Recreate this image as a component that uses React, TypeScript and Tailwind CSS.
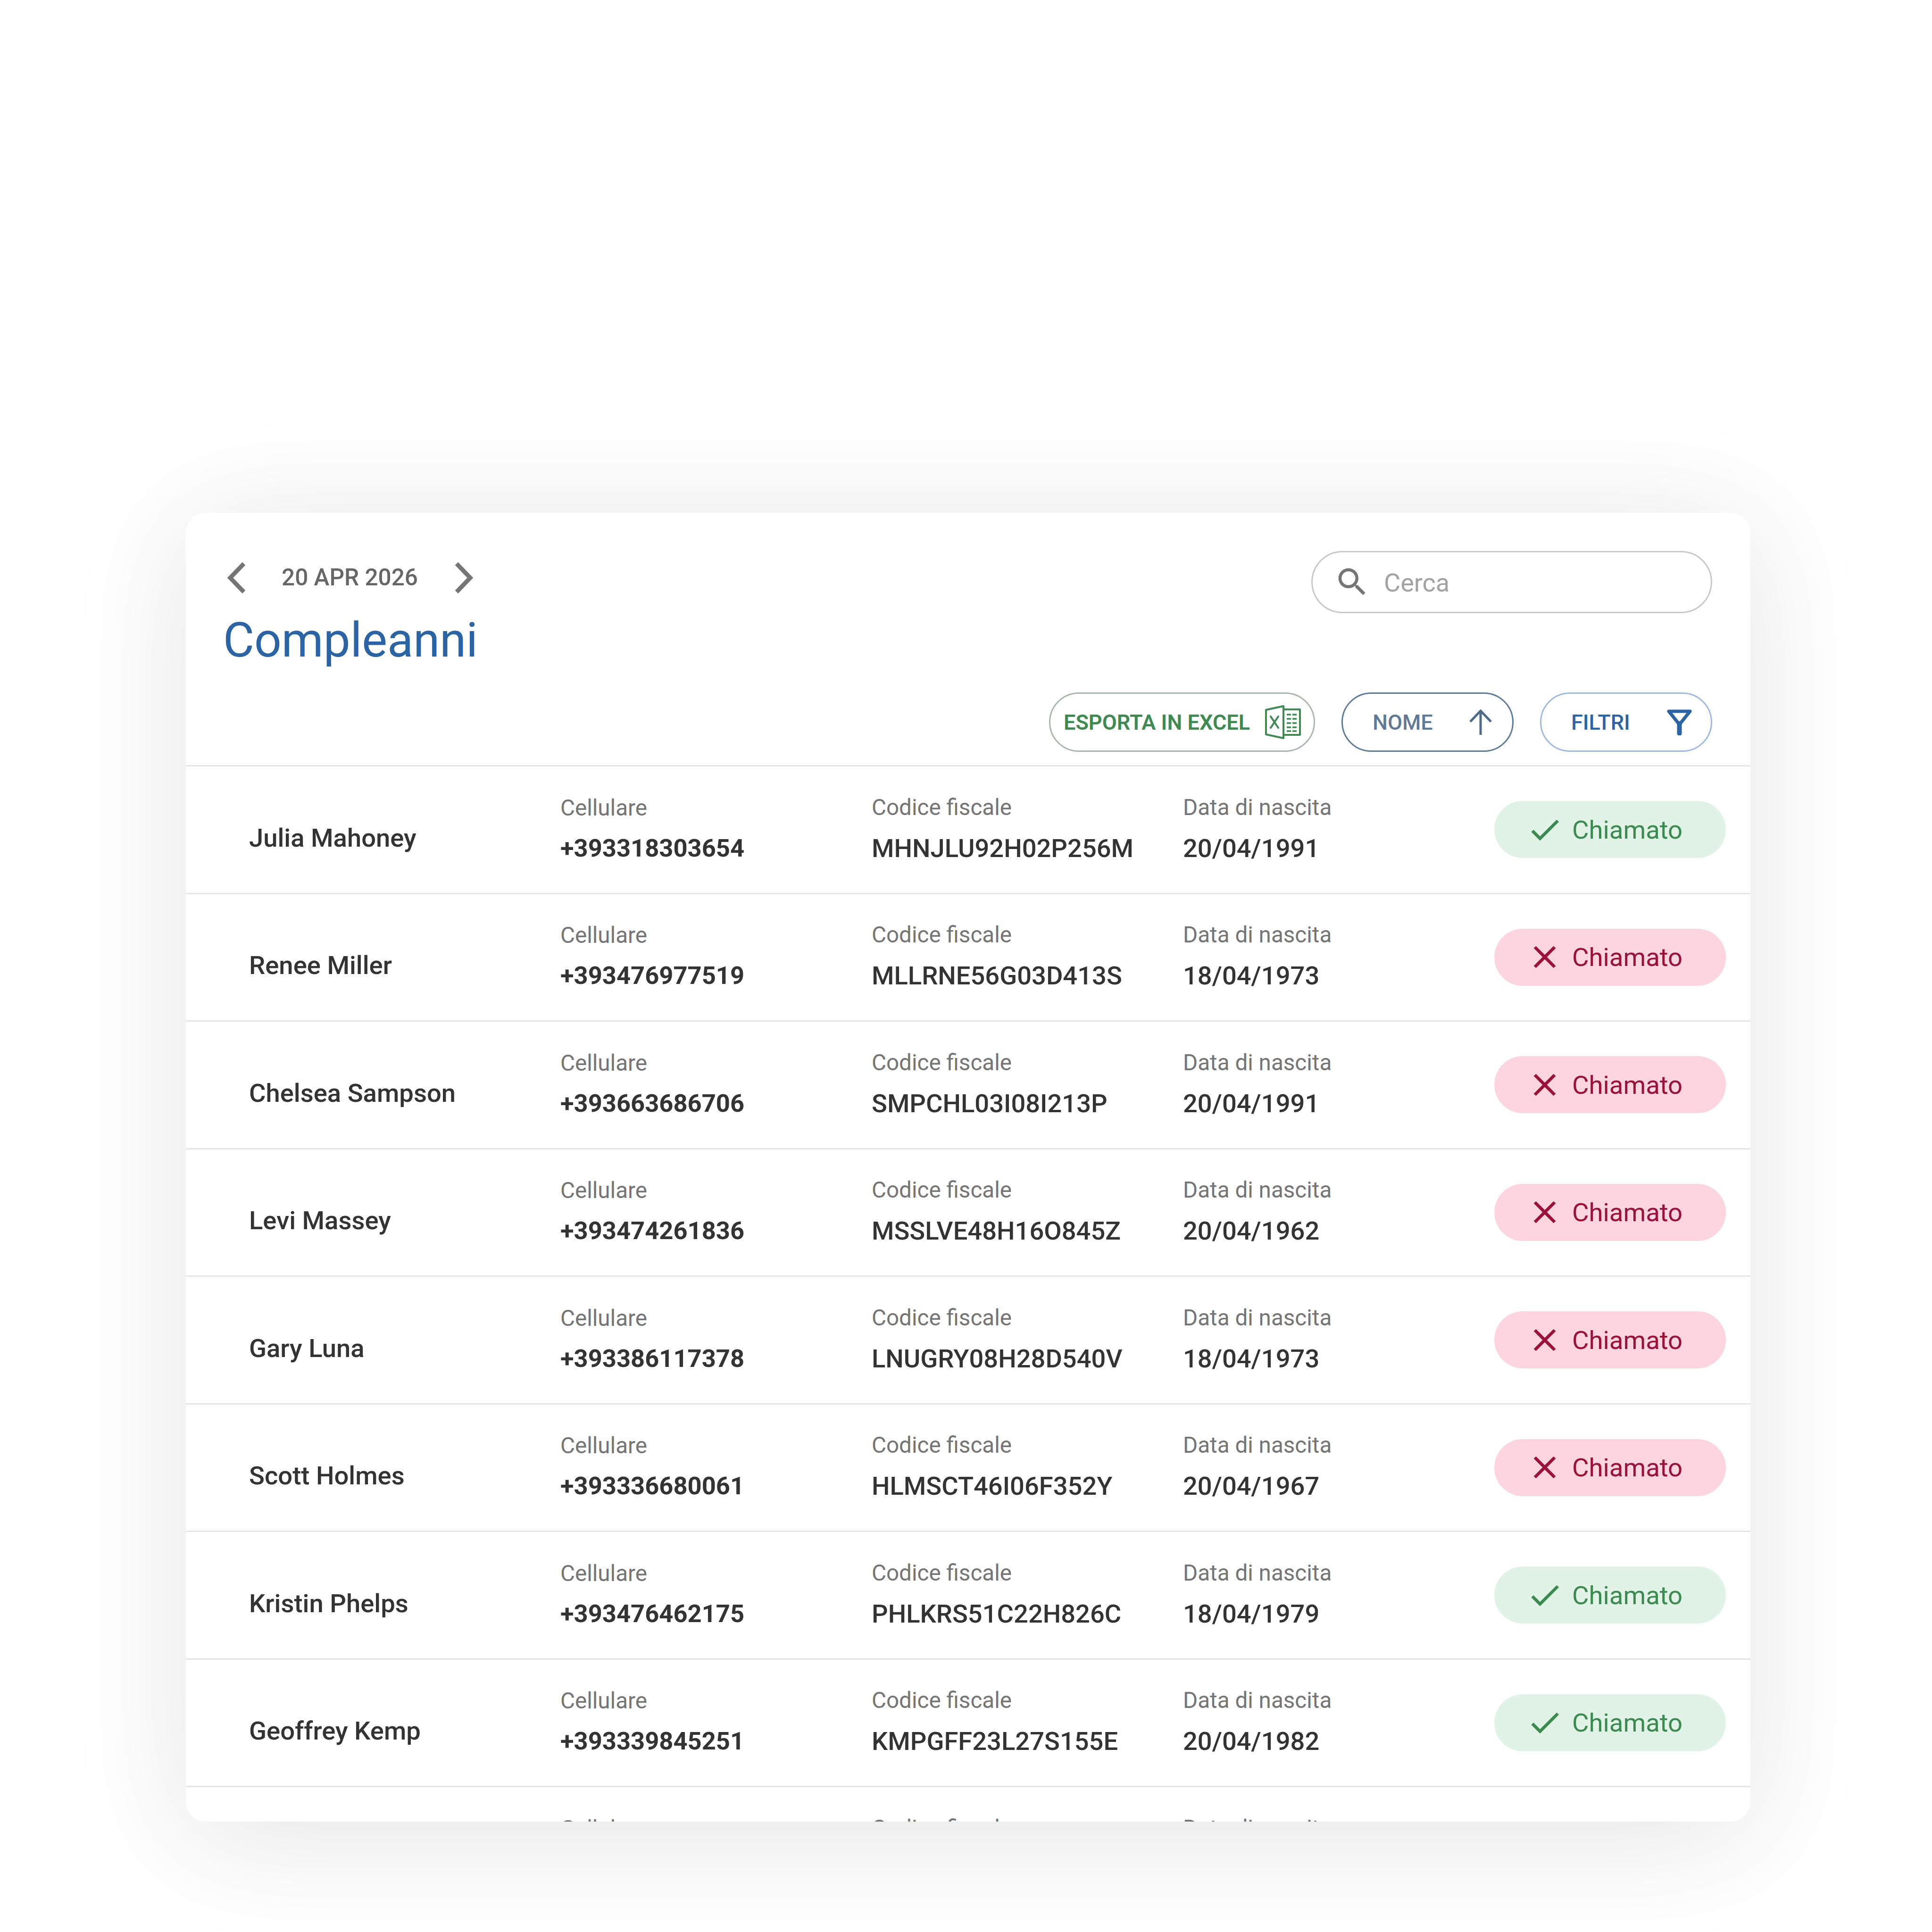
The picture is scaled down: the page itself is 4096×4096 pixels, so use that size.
const rows = [
  { name: "Julia Mahoney", phone: "+393318303654", cf: "MHNJLU92H02P256M", birth: "20/04/1991", called: true },
  { name: "Renee Miller", phone: "+393476977519", cf: "MLLRNE56G03D413S", birth: "18/04/1973", called: false },
  { name: "Chelsea Sampson", phone: "+393663686706", cf: "SMPCHL03I08I213P", birth: "20/04/1991", called: false },
  { name: "Levi Massey", phone: "+393474261836", cf: "MSSLVE48H16O845Z", birth: "20/04/1962", called: false },
  { name: "Gary Luna", phone: "+393386117378", cf: "LNUGRY08H28D540V", birth: "18/04/1973", called: false },
  { name: "Scott Holmes", phone: "+393336680061", cf: "HLMSCT46I06F352Y", birth: "20/04/1967", called: false },
  { name: "Kristin Phelps", phone: "+393476462175", cf: "PHLKRS51C22H826C", birth: "18/04/1979", called: true },
  { name: "Geoffrey Kemp", phone: "+393339845251", cf: "KMPGFF23L27S155E", birth: "20/04/1982", called: true },
  { name: "Wanda Reyes", phone: "+393471205583", cf: "RYSWND70A41F205K", birth: "20/04/1970", called: false },
];

function Field({ label, value, bold }: { label: string; value: string; bold?: boolean }) {
  return (
    <div className="flex flex-col pb-[6px]">
      <span className="text-[47.6px] leading-[60px] text-[#757575]">{label}</span>
      {bold ? (
        <span className="mt-[24px] text-[52.5px] font-bold leading-[62px] text-[#333333]">{value}</span>
      ) : (
        <span className="mt-[26px] text-[54.3px] font-medium leading-[62px] text-[#333333]">{value}</span>
      )}
    </div>
  );
}

function StatusPill({ called }: { called: boolean }) {
  return (
    <div
      className={`flex h-[121px] items-center gap-[18px] rounded-full pl-[67px] ${
        called ? "bg-[#e0f3e6] text-[#3b8a50]" : "bg-[#fdd5de] text-[#9b1239]"
      }`}
    >
      <svg viewBox="0 0 24 24" className="h-[80px] w-[80px]" fill="currentColor">
        {called ? (
          <path d="M9 16.17L4.83 12l-1.42 1.41L9 19 21 7l-1.41-1.41z" />
        ) : (
          <path d="M19 6.41L17.59 5 12 10.59 6.41 5 5 6.41 10.59 12 5 17.59 6.41 19 12 13.41 17.59 19 19 17.59 13.41 12z" />
        )}
      </svg>
      <span className="text-[54.5px] leading-none">Chiamato</span>
    </div>
  );
}

function ExcelIcon() {
  return (
    <svg viewBox="0 0 77 72" className="h-[72px] w-[77px]" fill="none" stroke="#3e8a50" strokeWidth="4" strokeLinejoin="round">
      <path d="M3 10 L40 2 V70 L3 62 Z" />
      <path d="M40 9 H75 V63 H40" />
      <path d="M13 24 L29 48 M29 24 L13 48" strokeLinecap="round" />
      <path d="M47 20 H68 M47 29 H68 M47 38 H68 M47 47 H68 M47 55 H68" strokeWidth="3.5" strokeDasharray="9 3" />
    </svg>
  );
}

export default function App() {
  return (
    <div className="h-[4096px] w-[4096px] overflow-hidden bg-white pl-[394px] pt-[1087px] font-['Roboto',sans-serif]">
      <div className="flex h-[2775px] w-[3317px] flex-col overflow-hidden rounded-[42px] bg-white shadow-[0_28px_350px_rgba(0,0,0,0.11)]">
        {/* Header */}
        <div className="flex h-[538px] shrink-0 flex-col justify-between border-b-[3px] border-[#e6e6e6] px-[81px] pb-[28px] pt-[81px]">
          <div className="flex items-start justify-between">
            <div className="flex flex-col">
              <div className="mt-[21px] flex items-center">
                <svg viewBox="0 0 48 72" className="h-[72px] w-[48px]" fill="none" stroke="#757575" strokeWidth="9">
                  <path d="M42 6 L13 36 L42 66" />
                </svg>
                <span className="ml-[74px] text-[49.5px] font-medium leading-none text-[#666666]">20 APR 2026</span>
                <svg viewBox="0 0 48 72" className="ml-[74px] h-[72px] w-[48px]" fill="none" stroke="#757575" strokeWidth="9">
                  <path d="M8 6 L37 36 L8 66" />
                </svg>
              </div>
              <h1 className="-ml-[2px] mt-[37px] text-[101.4px] font-normal leading-[120px] text-[#2a64a4]">Compleanni</h1>
            </div>
            <div className="flex h-[132px] w-[850px] items-center rounded-full border-[3px] border-[#c9c9c9] pl-[45px]">
              <svg viewBox="0 0 24 24" className="h-[78px] w-[78px]" fill="#757575">
                <path d="M15.5 14h-.79l-.28-.27C15.41 12.59 16 11.11 16 9.5 16 5.91 13.09 3 9.5 3S3 5.91 3 9.5 5.91 16 9.5 16c1.61 0 3.09-.59 4.23-1.57l.27.28v.79l5 4.99L20.49 19l-4.99-5zm-6 0C7.01 14 5 11.99 5 9.5S7.01 5 9.5 5 14 7.01 14 9.5 11.99 14 9.5 14z" />
              </svg>
              <span className="ml-[28px] mt-[3px] text-[54px] leading-none text-[#a3a3a3]">Cerca</span>
            </div>
          </div>

          <div className="flex justify-end gap-[56px]">
            <div className="flex h-[126px] w-[564px] items-center rounded-full border-[3px] border-[#a9b8ac] pl-[28px]">
              <span className="text-[45px] font-semibold leading-none text-[#3e8a50]">ESPORTA IN EXCEL</span>
              <span className="ml-[31px]">
                <ExcelIcon />
              </span>
            </div>
            <div className="flex h-[126px] w-[365px] items-center rounded-full border-[3px] border-[#5d7a9a] pl-[63px]">
              <span className="text-[45px] font-medium leading-none text-[#5f7a96]">NOME</span>
              <svg viewBox="0 0 50 54" className="ml-[76px] h-[54px] w-[50px]" fill="none" stroke="#4f6b8a" strokeWidth="5">
                <path d="M25 54 V3 M3 26 L25 3 L47 26" />
              </svg>
            </div>
            <div className="flex h-[126px] w-[365px] items-center rounded-full border-[3px] border-[#9dbbe0] pl-[63px]">
              <span className="text-[45px] font-medium leading-none text-[#2a64a4]">FILTRI</span>
              <svg viewBox="0 0 53 55" className="ml-[78px] h-[55px] w-[53px]" fill="none" stroke="#2a64a4" strokeLinejoin="round">
                <path d="M4 4 H49 L26.5 32 Z" strokeWidth="7" />
                <path d="M26.5 30 V51" strokeWidth="10" strokeLinecap="round" />
              </svg>
            </div>
          </div>
        </div>

        {/* Rows */}
        {rows.map((row) => (
          <div
            key={row.name}
            className="grid h-[270.5px] shrink-0 grid-cols-[repeat(4,660px)_491px] items-center border-b-[3px] border-[#e6e6e6] pl-[134px]"
          >
            <span className="pt-[36px] text-[54.4px] font-medium leading-[62px] text-[#333333]">{row.name}</span>
            <Field label="Cellulare" value={row.phone} bold />
            <Field label="Codice fiscale" value={row.cf} />
            <Field label="Data di nascita" value={row.birth} />
            <StatusPill called={row.called} />
          </div>
        ))}
      </div>
    </div>
  );
}
